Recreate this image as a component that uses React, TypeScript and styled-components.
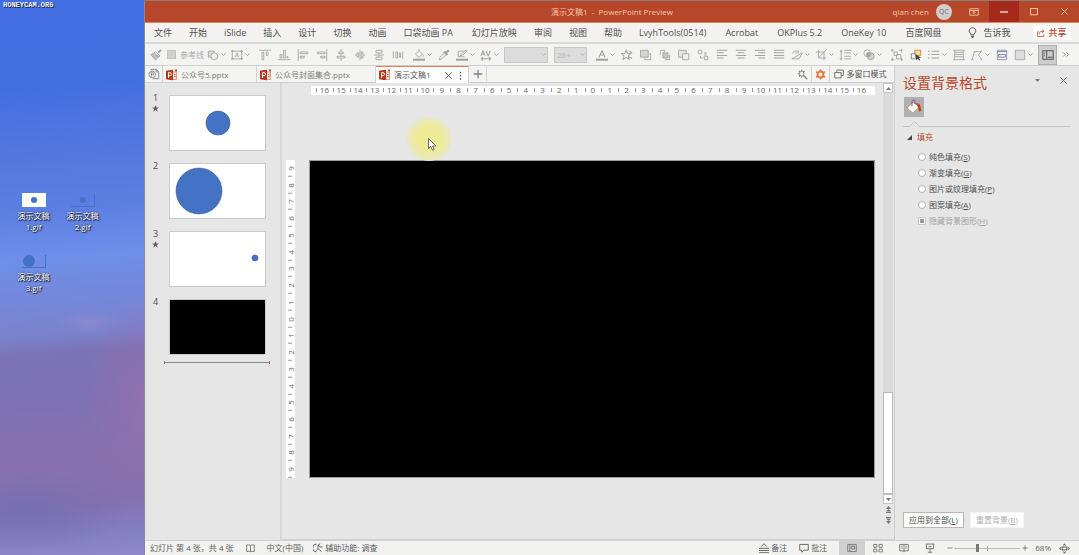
import React from "react";
import styled, { createGlobalStyle, css } from "styled-components";

const Global = createGlobalStyle`
  * { box-sizing: border-box; }
  html, body { margin: 0; padding: 0; }
  body, button, input, select {
    font-family: "Open Sans", "Noto Sans CJK SC", sans-serif;
    font-size: 8px;
    line-height: 12px;
    color: #4a4a4a;
  }
  button { background: none; border: 0; padding: 0; margin: 0; display: flex; align-items: center; justify-content: center; white-space: nowrap; }
  input { margin: 0; }
  svg { display: block; flex: none; }
`;

const Page = styled.div`
  display: flex;
  height: 100vh;
  overflow: hidden;
`;

/* ---------- desktop ---------- */

const Desktop = styled.aside`
  width: 144px;
  flex: none;
  padding: 0 0 0 3px;
  background:
    radial-gradient(ellipse 34px 12px at 62% 58%, rgba(150, 140, 204, 0.6), transparent),
    radial-gradient(ellipse 100px 40px at 20% 92%, rgba(114, 110, 176, 0.8), transparent),
    radial-gradient(ellipse 60px 100px at 100% 72%, rgba(146, 112, 176, 0.9), transparent),
    linear-gradient(176deg, #416ee2 0%, #446fe0 16%, #5077df 26%, #5c7fe2 38%, #6e8fe8 46%, #7488dc 53%, #7a82cc 60%, #7b74b6 63%, #7e72b4 72%, #8871b0 82%, #8471b0 90%, #8580c2 96%, #9088c8 100%);
`;

const Watermark = styled.div`
  font: bold 7px/11px "Liberation Mono", monospace;
  color: #f2f2f2;
  text-shadow: 1px 1px 0 #223;
`;

const Shortcuts = styled.div`
  display: grid;
  grid-template-columns: repeat(2, 49px);
  grid-auto-rows: 61px;
  padding: 182px 0 0 6px;
`;

const Shortcut = styled.a`
  display: flex;
  flex-direction: column;
  align-items: center;
  gap: 2px;
  width: 49px;
  text-align: center;
  text-decoration: none;
  color: #fff;
  line-height: 11px;
  text-shadow: 1px 1px 1px #111, 0 0 2px #222;
`;

/* ---------- window ---------- */

const Window = styled.main`
  flex: 1;
  min-width: 0;
  display: flex;
  flex-direction: column;
  border-left: 1px solid #8a8a8a;
  border-top: 1px solid #8a8078;
  background: #e6e6e6;
`;

const TitleBar = styled.header`
  display: grid;
  grid-template-columns: 1fr auto 1fr;
  align-items: center;
  height: 22px;
  flex: none;
  background: #b7472a;
  border-bottom: 1px solid #d98a5c;
  color: #f8c4a4;
`;

const TitleText = styled.h1`
  grid-column: 2;
  margin: 0;
  font-size: 8px;
  font-weight: 400;
  white-space: pre;
`;

const TitleRight = styled.div`
  display: flex;
  align-items: center;
  justify-content: flex-end;
  height: 21px;
`;

const Avatar = styled.span`
  width: 16px;
  height: 16px;
  margin: 0 7px;
  border-radius: 50%;
  background: #d2cdca;
  color: #777;
  font-size: 7px;
  line-height: 16px;
  text-align: center;
`;

const WinButton = styled.button<{ $hot?: boolean }>`
  width: 30px;
  height: 21px;
  color: ${(p) => (p.$hot ? "#fff" : "#f4bd9c")};
  background: ${(p) => (p.$hot ? "#a52a1c" : "none")};
`;

const MenuBar = styled.nav`
  display: flex;
  align-items: center;
  gap: 17px;
  height: 21px;
  flex: none;
  padding: 0 8px 0 9px;
  background: #f3f2f1;
  border-bottom: 2px solid #dadada;
`;

const MenuItem = styled.button<{ $wide?: boolean }>`
  font-size: 9px;
  gap: 6px;
  margin-right: ${(p) => (p.$wide ? 2 : 0)}px;
  color: #505050;
`;

const TellMe = styled(MenuItem)`
  margin-left: 8px;
`;

const Share = styled.button`
  width: 38px;
  height: 14px;
  gap: 3px;
  margin-left: auto;
  background: #fff;
  color: #b7472a;
  font-size: 9px;
  font-weight: 500;
`;

const ToolBar = styled.div`
  display: flex;
  align-items: center;
  height: 22px;
  flex: none;
  padding: 0 8px 0 1px;
  color: #a2a2a2;
  background: #f3f3f2;
  border-bottom: 1px solid #cfcfcf;
`;

const ToolGroup = styled.div<{ $tight?: boolean }>`
  display: flex;
  align-items: center;
  flex: none;
  margin-right: ${(p) => (p.$tight ? 0 : 3)}px;
`;

const Tool = styled.button<{ $menu?: boolean; $on?: boolean }>`
  width: ${(p) => (p.$menu ? 24 : 19)}px;
  height: 20px;
  flex: none;
  justify-content: ${(p) => (p.$menu ? "flex-start" : "center")};
  padding-left: ${(p) => (p.$menu ? 3 : 0)}px;
  gap: 2px;
  color: ${(p) => (p.$on ? "#555" : "#a2a2a2")};
  ${(p) => p.$on && css`background: #cdcdcd; border: 1px solid #b0b0b0;`}
`;

const GuideToggle = styled.label`
  display: flex;
  align-items: center;
  gap: 4px;
  width: 39px;
  padding-left: 2px;
  color: #aaa;
  white-space: nowrap;
  input { appearance: none; width: 9px; height: 9px; background: #cfcfcf; border: 1px solid #c2c2c2; }
`;

const Combo = styled.div<{ $w: number }>`
  position: relative;
  width: ${(p) => p.$w}px;
  flex: none;
  margin-right: 6px;
  select {
    appearance: none;
    display: block;
    width: 100%;
    height: 16px;
    padding: 0 2px;
    border: 1px solid #c6c6c6;
    border-radius: 0;
    background: #dcdcdc;
    color: #b4b4b4;
    opacity: 1;
  }
  svg { position: absolute; right: 2px; top: 5px; color: #b0b0b0; }
`;

const Body = styled.div`
  display: flex;
  flex: 1;
  min-height: 0;
`;

const Main = styled.div`
  display: flex;
  flex-direction: column;
  flex: 1;
  min-width: 0;
`;

const TabStrip = styled.div`
  display: flex;
  height: 17px;
  flex: none;
  background: #f3f3f2;
  border-bottom: 1px solid #cfcfcf;
`;

const StripButton = styled.button`
  width: 18px;
  border-right: 1px solid #d4d4d4;
  color: #808080;
`;

const ModeButton = styled(StripButton)`
  width: 64px;
  gap: 3px;
  padding-right: 4px;
  border-right: 0;
  color: #555;
`;

const DocTab = styled.div<{ $w: number; $active?: boolean }>`
  display: flex;
  align-items: center;
  gap: 3px;
  width: ${(p) => p.$w}px;
  height: ${(p) => (p.$active ? 17 : 16)}px;
  padding: 0 3px;
  border-top: 1px solid ${(p) => (p.$active ? "#e8814f" : "transparent")};
  border-right: 1px solid #d4d4d4;
  background: ${(p) => (p.$active ? "#fff" : "none")};
  button { color: ${(p) => (p.$active ? "#555" : "#7c7c7c")}; }
`;

const Spacer = styled.div`
  flex: 1;
`;

const Work = styled.div`
  display: flex;
  flex: 1;
  min-height: 0;
`;

const Thumbs = styled.ol`
  width: 137px;
  flex: none;
  margin: 0;
  padding: 12px 10px 0 8px;
  list-style: none;
  border-right: 2px solid #d8d8d8;
`;

const Thumb = styled.li`
  display: flex;
  gap: 11px;
  margin-bottom: 12px;
`;

const ThumbLabel = styled.div`
  display: flex;
  flex-direction: column;
  width: 5px;
  font-size: 9px;
  line-height: 6px;
  gap: 4px;
  svg { margin-left: -1px; }
`;

const ThumbSlide = styled.button<{ $dark?: boolean }>`
  width: 97px;
  height: 56px;
  border: 1px solid #cacaca;
  background: ${(p) => (p.$dark ? "#000" : "#fff")};
`;

const InsertMark = styled.div`
  height: 3px;
  margin: -6px 0 0 11px;
  border: solid #b5654a;
  border-width: 0 1px;
  background: linear-gradient(#8a8a8a, #8a8a8a) center / 100% 1px no-repeat;
`;

const Canvas = styled.section`
  display: flex;
  flex-direction: column;
  flex: 1;
  min-width: 0;
  padding: 3px 8px 0 4px;
  border-bottom: 1px solid #cfcfcf;
  position: relative;
`;

const RulerH = styled.div`
  display: flex;
  flex: none;
  height: 9px;
  margin-left: 25px;
  padding: 0 5px;
  background: #fff;
`;

const RulerV = styled.div`
  display: flex;
  flex-direction: column;
  width: 9px;
  background: #fff;
`;

const Mark = styled.span<{ $v?: boolean }>`
  position: relative;
  flex: 1;
  min-width: 0;
  min-height: 0;
  display: flex;
  align-items: center;
  justify-content: center;
  height: ${(p) => (p.$v ? "auto" : "8px")};
  line-height: 8px;
  color: #666;
  ${(p) => p.$v && css`writing-mode: vertical-rl; transform: rotate(180deg);`}
  &::before {
    content: "";
    position: absolute;
    background: #999;
    ${(p) => (p.$v ? "width: 4px; height: 1px; top: 0; left: 3px;" : "width: 1px; height: 4px; left: 0; top: 2px;")}
  }
`;

const Stage = styled.div`
  display: flex;
  flex: 1;
  align-items: center;
  padding-top: 4px;
`;

const StageRow = styled.div`
  display: flex;
  flex: 1;
  gap: 14px;
`;

const Slide = styled.div`
  flex: 1;
  aspect-ratio: 566 / 318;
  background: #000;
  border: 1px solid #9a9a9a;
`;

const Pointer = styled.div`
  position: absolute;
  left: 125px;
  top: 34px;
  width: 44px;
  height: 44px;
  border-radius: 50%;
  background: radial-gradient(circle, #eeeb96 0 12px, #ebe9b0 17px, #e9e8be 22px);
  svg { position: absolute; left: 21px; top: 21px; }
`;

const ScrollColumn = styled.div`
  display: flex;
  flex-direction: column;
  width: 11px;
  flex: none;
  padding-bottom: 13px;
  border-bottom: 1px solid #cfcfcf;
  color: #666;
`;

const ScrollButton = styled.button<{ $flat?: boolean }>`
  width: 10px;
  height: ${(p) => (p.$flat ? 11 : 10)}px;
  flex: none;
  border: ${(p) => (p.$flat ? "0" : "1px solid #c4c4c4")};
  background: ${(p) => (p.$flat ? "none" : "#fff")};
  color: #777;
`;

const Track = styled.div`
  display: flex;
  flex-direction: column;
  justify-content: flex-end;
  flex: 1;
  width: 10px;
  background: #dadada;
  &::after {
    content: "";
    height: 25%;
    background: #fff;
    border: 1px solid #b8b8b8;
  }
`;

const Pane = styled.aside`
  display: flex;
  flex-direction: column;
  width: 185px;
  flex: none;
  padding: 7px 9px 12px 8px;
  border-left: 1px solid #cfcfcf;
  background: #e6e6e6;
`;

const PaneHead = styled.div`
  display: flex;
  align-items: flex-start;
  h2 { flex: 1; margin: 0; font-size: 14px; line-height: 20px; font-weight: 400; color: #b7472a; }
  button { width: 14px; height: 14px; color: #777; }
  button + button { margin-left: 12px; }
`;

const FillButton = styled.button`
  width: 20px;
  height: 20px;
  margin: 4px 0 0 1px;
  background: #b0b0b0;
`;

const Divider = styled.div`
  display: flex;
  height: 10px;
  padding-left: 6px;
  border-bottom: 1px solid #c6c6c6;
  align-items: flex-end;
  svg { margin-bottom: -1px; }
`;

const SectionHead = styled.button`
  align-self: flex-start;
  gap: 5px;
  margin: 4px 0 8px 4px;
  color: #b7472a;
`;

const Options = styled.fieldset`
  display: flex;
  flex-direction: column;
  gap: 4px;
  flex: 1;
  margin: 0;
  padding: 0 0 0 15px;
  border: 0;
`;

const Option = styled.label<{ $off?: boolean }>`
  display: flex;
  align-items: center;
  gap: 3px;
  height: 12px;
  color: ${(p) => (p.$off ? "#a4a4a4" : "#505050")};
  input { appearance: none; width: 8px; height: 8px; background: #fff; border: 1px solid #b4b4b4; }
  input[type="radio"] { border-radius: 50%; }
  input[type="checkbox"] { background: linear-gradient(#999, #999) center / 4px 4px no-repeat #fff; border-color: #c8c8c8; }
`;

const PaneFoot = styled.div`
  display: flex;
  gap: 6px;
`;

const PaneButton = styled.button<{ $off?: boolean }>`
  height: 16px;
  padding: 0 5px;
  border: 1px solid ${(p) => (p.$off ? "#f4f4f4" : "#b8b8b8")};
  background: #fff;
  color: ${(p) => (p.$off ? "#b0b0b0" : "#4a4a4a")};
`;

const StatusBar = styled.footer`
  display: flex;
  align-items: center;
  height: 15px;
  flex: none;
  padding: 0 7px 0 5px;
  background: #f2f2f0;
  border-top: 1px solid #cfcfcf;
  white-space: nowrap;
`;

const StatusItem = styled.button<{ $gap?: number }>`
  gap: 2px;
  margin-right: ${(p) => p.$gap ?? 12}px;
  color: #606060;
`;

const ViewButton = styled.button<{ $on?: boolean }>`
  width: 26px;
  height: 14px;
  color: #707070;
  background: ${(p) => (p.$on ? "#d0d0d0" : "none")};
`;

const Zoom = styled.div`
  display: flex;
  align-items: center;
  margin: 0 6px 0 2px;
  button { width: 9px; height: 12px; color: #777; }
  input {
    appearance: none;
    width: 66px;
    height: 12px;
    background:
      linear-gradient(#aaa, #aaa) center / 1px 5px no-repeat,
      linear-gradient(#bbb, #bbb) center / 100% 1px no-repeat;
  }
  input::-webkit-slider-thumb { appearance: none; width: 3px; height: 8px; background: #777; }
`;

/* ---------- drawings ---------- */

const Ico = ({ children, size = 14 }: { children: React.ReactNode; size?: number }) => (
  <svg width={size} height={size} viewBox="0 0 14 14" fill="none" stroke="currentColor" strokeWidth="1" aria-hidden="true">
    {children}
  </svg>
);

const Chevron = () => (
  <svg width="5" height="5" viewBox="0 0 5 5" fill="none" stroke="currentColor" aria-hidden="true">
    <path d="M.5 1.500l2 2 2-2" />
  </svg>
);

const Triangle = ({ up }: { up?: boolean }) => (
  <svg width="5" height="3" viewBox="0 0 5 3" fill="currentColor" aria-hidden="true">
    <path d={up ? "M0 3h5L2.500 0z" : "M0 0h5L2.500 3z"} />
  </svg>
);

const DoubleArrow = ({ down }: { down?: boolean }) => (
  <svg width="5" height="7" viewBox="0 0 5 7" fill="currentColor" aria-hidden="true">
    <path d={down ? "M0 0h5v1H0zM0 1.500h5L2.500 4zM0 4h5L2.500 7z" : "M0 3h5L2.500 0zM0 5.500h5L2.500 3zM0 6h5v1H0z"} />
  </svg>
);

const Cross = () => <Ico size={9}><path d="M2 2l10 10M12 2L2 12" strokeWidth="1.500" /></Ico>;

const PptIcon = () => (
  <svg width="12" height="12" viewBox="0 0 12 12" aria-hidden="true">
    <path d="M6.500 3h4v7.500h-4z" fill="#f1e2dc" stroke="#d08a74" strokeWidth=".8" />
    <path d="M0 2.500Q0 1.500 1 1.500L7 .8v10.400L1 10.500Q0 10.500 0 9.500z" fill="#b7381c" />
    <path d="M2.500 9V3.700h1.500a1.500 1.500 0 010 3H2.500" fill="none" stroke="#fff" />
    <path d="M9 .5h2v2H9z" fill="#d0492b" />
    <path d="M8 5.500h1.500M8 7.500h1.500" stroke="#c8674c" />
  </svg>
);

const StarMark = () => (
  <svg width="7" height="7" viewBox="0 0 7 7" fill="#606060" aria-hidden="true">
    <path d="M3.500 0l.9 2.400H7L4.900 4l.8 2.700-2.200-1.600-2.200 1.600L2.100 4 0 2.400h2.600z" />
  </svg>
);

const G: Record<string, React.ReactNode> = {
  brush: <><path d="M13 1L9.500 4.500" strokeWidth="2" /><path d="M6.500 3l5 5-1 1.500-5.500-5z" fill="#f3f3f2" /><path d="M4.500 5L1 6.500 6.500 13l3-3.500z" fill="currentColor" fillOpacity=".6" /></>,
  shapes: <><path d="M1.500 2.500h7v7h-7z" fill="#dedede" /><circle cx="8.500" cy="8.500" r="4" fill="#f3f3f2" /></>,
  text: <><path d="M1.500 2.500h11v9h-11z" /><path d="M5 9.500L7 4.500l2 5M6 8h2" /><path d="M0 2.500h3M11 2.500h3M0 11.500h3M11 11.500h3M1.500 1v3M12.500 1v3M1.500 10v3M12.500 10v3" /></>,
  top: <><path d="M0 1.500h14" /><path d="M3.500 3.500h2v9h-2zM8.500 3.500h2v4h-2z" /></>,
  bottom: <><path d="M0 12.500h14" /><path d="M2.500 6.500h2v4h-2zM6.500 1.500h2v9h-2zM10.500 8.500h1v2h-1z" /></>,
  left: <><path d="M1.500 0v14" /><path d="M3.500 3.500h9v2h-9zM3.500 8.500h5v2h-5z" /></>,
  right: <><path d="M12.500 0v14" /><path d="M1.500 3.500h9v2h-9zM5.500 8.500h5v2h-5z" /></>,
  middle: <><path d="M7 0v3M7 6v2M7 11v3" /><path d="M4.500 3.500h5v2h-5zM2.500 8.500h9v2h-9z" /></>,
  distH: <><path d="M3.500 4.500h2v5h-2zM8.500 3.500h2v7h-2zM7 1v12M1 7h2M11 7h2" /></>,
  distV: <><path d="M3.500 1.500h7v3h-7zM3.500 9.500h7v3h-7zM7 5v4M1 7h12" /></>,
  spread: <><path d="M1.500 3v8M12.500 3v8M4.500 3.500h2v7h-2zM8.500 4.500h1.500v5H8.500z" /></>,
  bucket: <><path d="M3 6l4-4 4 4-4 4zM7 2V0M11.500 6.500c1 1.500 1 2-.2 2.500" /><path d="M0 12.500h14" strokeWidth="2.400" /></>,
  dropper: <><path d="M1.500 12.500l1-3 5-5 2 2-5 5z" /><path d="M7 3l4 4M8.500 5.500L12.500 1.500" strokeWidth="2.600" /></>,
  pen: <><path d="M9 2.500H2.500v6.500H10M5 8l1-2 6-5 1 1.500L7.500 7.500z" /><path d="M0 12.500h14" strokeWidth="2.400" /></>,
  spacing: <><path d="M1 8l2.500-6L6 8M2 6h3M7 2l2.500 6L12 2M1.500 11.500h11M3.500 9.500l-2 2 2 2M10.500 9.500l2 2-2 2" strokeWidth="1.200" /></>,
  fontColor: <><path d="M3.500 9.500L7 2l3.500 7.500M4.500 7h5" strokeWidth="1.300" /><path d="M0 12.500h14" strokeWidth="2.400" /></>,
  star: <><path d="M6 1.500L7.500 5l4 .3-3 2.700 1 4-3.500-2-3.500 2 1-4-3-2.700L4.500 5zM10 2l3 3M9 9l4 2" strokeWidth="1.200" /></>,
  front: <><path d="M5.500 10.500v2h7v-7h-2" /><path d="M.5 1.500h9v8h-9z" fill="#d6d6d6" /></>,
  forward: <><path d="M1.500 6.500v-5h5v2M12.500 7v5.500H7" /><path d="M4.500 4.500h6v6h-6z" fill="#c6c6c6" /></>,
  back: <><path d="M.5 1.500h9v8h-9z" fill="#e2e2e2" /><path d="M5.500 5.500h7v7h-7z" fill="#f3f3f2" /></>,
  backward: <><path d="M1.500 1.500h4v4h-4zM8.500 8.500h4v4h-4z" /><path d="M8 4.500h2.500V7H8M4 8v2.500h3" /></>,
  linesL: <path d="M1 1.500h12M1 4.500h8M1 7.500h12M1 10.500h8" strokeWidth="1.200" />,
  linesC: <path d="M1 1.500h12M3 4.500h8M1 7.500h12M3 10.500h8" strokeWidth="1.200" />,
  linesR: <path d="M1 1.500h12M5 4.500h8M1 7.500h12M5 10.500h8" strokeWidth="1.200" />,
  linesJ: <path d="M1 1.500h12M1 4.500h12M1 7.500h12M1 10.500h12" strokeWidth="1.200" />,
  rotate: <path d="M1 11.500h8.500l3.500-7L1 11.500M1.500 5.500c1-3.500 5-4 6.500-1.500M8.500 1.500V4.500H5.500" />,
  crop: <path d="M4 1v9.500H13M1 3.500h9.500V13M13.500.5l-9 9.500" />,
  lineGap: <path d="M6 1.500h8M6 4.500h8M6 8.500h8M6 11.500h8M2.500 1v12M1 3.500l1.500-2L4 3.500M1 10.500l1.500 2 1.500-2" />,
  merge: <><circle cx="5" cy="5" r="4" /><circle cx="9" cy="8.500" r="4" fill="#d0d0d0" /><circle cx="6.500" cy="6.500" r="2.400" fill="#a2a2a2" /></>,
  group: <><path d="M3.500 3.500h4v4h-4zM6.500 6.500h5v5h-5z" /><path d="M0 1.500h3M1.500 0v3M9 1.500h4M12.500 0v4M0 12.500h4M1.500 10v4M11 12.500h3M12.500 10v4" /></>,
  list: <path d="M0 2.500h2M4 2.500h9M0 6.500h2M4 6.500h9M0 10.500h2M4 10.500h9" strokeWidth="1.200" />,
  table: <path d="M0 1.500h14M2.500 4h9M2.500 6.500h9M2.500 9h9M0 12.500h14M2 2v10M12 2v10" />,
  curve: <path d="M1.500 12L4 3h8L8.500 7l4 5M0 12.500h3M11 2.500h2M3 3.500h2M11 12.500h2" />,
  square: <path d="M1.500 1.500h11v11h-11z" fill="#dedede" />,
};

const Glyph = ({ name }: { name: string }) => <Ico size={12}>{G[name]}</Ico>;

const tool = (name: string, menu = false) => (
  <Tool key={name} $menu={menu} aria-label={name}>
    <Glyph name={name} />
    {menu && <Chevron />}
  </Tool>
);

const menus = ["文件", "开始", "iSlide", "插入", "设计", "切换", "动画", "口袋动画 PA", "幻灯片放映", "审阅", "视图", "帮助", "LvyhTools(0514)", "Acrobat", "OKPlus 5.2", "OneKey 10", "百度网盘"];
const hMarks = Array.from({ length: 33 }, (_, i) => Math.abs(i - 16));
const vMarks = Array.from({ length: 19 }, (_, i) => Math.abs(i - 9));

const thumbs = [
  { star: true, cx: 48, cy: 27, r: 12 },
  { star: false, cx: 29, cy: 27, r: 23 },
  { star: true, cx: 85, cy: 26, r: 3 },
  { star: false, dark: true, cx: 0, cy: 0, r: 0 },
];

const options = [["纯色填充", "S"], ["渐变填充", "G"], ["图片或纹理填充", "P"], ["图案填充", "A"]];

const shortcuts = [
  { name: "演示文稿", file: "1.gif", paper: true, cx: 12, cy: 7, r: 3 },
  { name: "演示文稿", file: "2.gif", paper: false, cx: 12, cy: 7, r: 3 },
  { name: "演示文稿", file: "3.gif", paper: false, cx: 7, cy: 7, r: 6 },
];

export default function App() {
  return (
    <Page>
      <Global />
      <Desktop>
        <Watermark>HONEYCAM.ORG</Watermark>
        <Shortcuts>
          {shortcuts.map((s) => (
            <Shortcut href="#" key={s.file}>
              <svg width="24" height="15" viewBox="0 0 24 15" aria-hidden="true">
                {s.paper ? <path d="M0 0h24v14H0z" fill="#fff" /> : <path d="M0 13.500h23.500V1" fill="none" stroke="#4672c4" />}
                <circle cx={s.cx} cy={s.cy} r={s.r} fill="#4472c4" />
              </svg>
              <span>{s.name}<br />{s.file}</span>
            </Shortcut>
          ))}
        </Shortcuts>
      </Desktop>

      <Window>
        <TitleBar>
          <TitleText>演示文稿1  -  PowerPoint Preview</TitleText>
          <TitleRight>
            <span>qian chen</span>
            <Avatar>QC</Avatar>
            <WinButton aria-label="功能区显示选项"><Ico size={10}><path d="M1 2.500h12v9H1zM1 5h12M7 10V6M5 8l2-2 2 2" strokeWidth="1.300" /></Ico></WinButton>
            <WinButton $hot aria-label="最小化"><Ico size={8}><path d="M0 7h14" strokeWidth="2" /></Ico></WinButton>
            <WinButton aria-label="最大化"><Ico size={8}><path d="M1 1h12v11H1z" strokeWidth="1.800" /></Ico></WinButton>
            <WinButton aria-label="关闭"><Cross /></WinButton>
          </TitleRight>
        </TitleBar>

        <MenuBar>
          {menus.map((m, i) => <MenuItem key={m} $wide={i === 7 || (i > 11 && i < 16)}>{m}</MenuItem>)}
          <TellMe>
            <Ico size={11}><path d="M5 10V8.500C1 6 3 1 7 1s6 5 2 7.500V10zM5 12h4M6 13.500h2" strokeWidth="1.200" /></Ico>
            告诉我
          </TellMe>
          <Share>
            <Ico size={8}><path d="M4 5H1v8h11V9M4 9c0-4 3-5 8-5M9 1l3.500 3L9 7" strokeWidth="1.400" /></Ico>
            共享
          </Share>
        </MenuBar>

        <ToolBar>
          <ToolGroup>
            {tool("brush")}
            <GuideToggle><input type="checkbox" disabled />参考线</GuideToggle>
            {tool("shapes", true)}
            {tool("text", true)}
          </ToolGroup>
          <ToolGroup>
            {["top", "bottom", "left", "right", "middle", "distH", "distV", "spread"].map((n) => tool(n))}
          </ToolGroup>
          <ToolGroup>
            {tool("bucket", true)}
            {tool("dropper")}
            {tool("pen", true)}
            {tool("spacing", true)}
          </ToolGroup>
          <Combo $w={44}><select aria-label="字体" disabled><option> </option></select><Chevron /></Combo>
          <Combo $w={33}><select aria-label="字号" disabled><option>28+</option></select><Chevron /></Combo>
          <ToolGroup>
            {tool("fontColor", true)}
            {["star", "front", "forward", "back", "backward", "linesL", "linesC", "linesR", "linesJ"].map((n) => tool(n))}
            {tool("rotate", true)}
            {tool("crop", true)}
            {tool("lineGap", true)}
            {tool("merge", true)}
          </ToolGroup>
          <ToolGroup $tight>
            {tool("group")}
            <Tool aria-label="选择窗格">
              <Ico size={12}><path d="M5.500 1.500h7v6h-7z" fill="#f9df8c" stroke="#c97a4a" /><path d="M1.500 5.500h5v6h-5z" fill="#f3f3f2" stroke="#777" /><path d="M7 6v7l2-2 1.500 2.500L12 13l-1.500-2.500H13z" fill="#444" stroke="none" /></Ico>
            </Tool>
            {tool("list", true)}
          </ToolGroup>
          <ToolGroup $tight>
            {tool("table")}
            {tool("curve", true)}
          </ToolGroup>
          <ToolGroup>
            <Tool aria-label="幻灯片大小">
              <Ico size={12}><path d="M1.500 1.500h11v11h-11z" stroke="#8c8cb0" /><path d="M1.500 3h11M3 6.500h8v3H3z" stroke="#7474a8" /></Ico>
            </Tool>
            {tool("square", true)}
          </ToolGroup>
          <Tool $on aria-label="窗格">
            <Ico size={12}><path d="M1 2h12v10H1zM5.500 2V12M2.500 5h1M2.500 8h1M7 9.500h5" strokeWidth="1.200" /></Ico>
          </Tool>
          <Tool aria-label="更多"><Ico size={9}><path d="M2 4l3 3-3 3M7 4l3 3-3 3" stroke="#777" strokeWidth="1.400" /></Ico></Tool>
        </ToolBar>

        <Body>
          <Main>
            <TabStrip>
              <StripButton aria-label="文档列表"><Ico size={12}><path d="M3.500 3V1.500h6l3 3v8h-7M9.500 1.500v3h3" /><circle cx="5" cy="7.500" r="3.800" /><path d="M4 10V5.500h1.500a1 1 0 010 2.500H4" /></Ico></StripButton>
              <DocTab $w={94}><PptIcon /><button>公众号5.pptx</button></DocTab>
              <DocTab $w={119}><PptIcon /><button>公众号封面集合.pptx</button></DocTab>
              <DocTab $w={93} $active>
                <PptIcon /><button>演示文稿1</button><Spacer />
                <button aria-label="关闭标签"><Cross /></button>
                <button aria-label="标签菜单"><Ico size={9}><path d="M7 1v2.500M7 6v2.500M7 11v2.500" strokeWidth="2" /></Ico></button>
              </DocTab>
              <StripButton aria-label="新建标签"><Ico size={10}><path d="M7 1v12M1 7h12" strokeWidth="1.800" /></Ico></StripButton>
              <Spacer />
              <StripButton aria-label="搜索标签"><Ico size={11}><circle cx="6" cy="6" r="3" /><path d="M8 8l5 5M6 1v2M6 9v2M1 6h2M2.500 2.500L4 4M9.500 2.500L8 4M2.500 9.500L4 8" strokeWidth="1.500" /></Ico></StripButton>
              <StripButton aria-label="设置"><Ico size={11}><circle cx="7" cy="7" r="3.800" stroke="#e2743c" strokeWidth="2.400" /><path d="M7 .5v2M7 11.500v2M1.500 3.500l1.500 1M11 9.500l1.500 1M1.500 10.500l1.500-1M11 4.500l1.500-1" stroke="#e2743c" strokeWidth="2" /></Ico></StripButton>
              <ModeButton><Ico size={10}><path d="M4 4V1.500h9V9h-2.500M1 5h9v7.500H1z" strokeWidth="1.100" /></Ico>多窗口模式</ModeButton>
            </TabStrip>

            <Work>
              <Thumbs>
                {thumbs.map((t, i) => (
                  <Thumb key={i}>
                    <ThumbLabel>{i + 1}{t.star && <StarMark />}</ThumbLabel>
                    <ThumbSlide $dark={t.dark} aria-label={`幻灯片 ${i + 1}`}>
                      <svg width="95" height="54" viewBox="0 0 95 54" aria-hidden="true">
                        <circle cx={t.cx} cy={t.cy} r={t.r} fill="#4472c4" stroke={t.r ? "#3d568f" : "none"} strokeWidth=".6" />
                      </svg>
                    </ThumbSlide>
                  </Thumb>
                ))}
                <InsertMark />
              </Thumbs>

              <Canvas>
                <RulerH>{hMarks.map((n, i) => <Mark key={i}>{n}</Mark>)}</RulerH>
                <Stage>
                  <StageRow>
                    <RulerV>{vMarks.map((n, i) => <Mark $v key={i}>{n}</Mark>)}</RulerV>
                    <Slide />
                  </StageRow>
                </Stage>
                <Pointer>
                  <svg width="9" height="13" viewBox="0 0 9 13" aria-hidden="true">
                    <path d="M.5.5v10l2.300-2 1.700 3.800 1.700-.8-1.700-3.500h3.300z" fill="#fff" stroke="#444" strokeWidth=".8" />
                  </svg>
                </Pointer>
              </Canvas>

              <ScrollColumn>
                <ScrollButton aria-label="向上滚动"><Triangle up /></ScrollButton>
                <Track />
                <ScrollButton aria-label="向下滚动"><Triangle /></ScrollButton>
                <ScrollButton $flat aria-label="上一张幻灯片"><DoubleArrow /></ScrollButton>
                <ScrollButton $flat aria-label="下一张幻灯片"><DoubleArrow down /></ScrollButton>
              </ScrollColumn>
            </Work>
          </Main>

          <Pane>
            <PaneHead>
              <h2>设置背景格式</h2>
              <button aria-label="窗格选项"><Triangle /></button>
              <button aria-label="关闭窗格"><Cross /></button>
            </PaneHead>
            <FillButton aria-label="填充">
              <svg width="16" height="16" viewBox="0 0 16 16" aria-hidden="true">
                <path d="M1 9l6-6 6 5-6 6z" fill="#fff" stroke="#e0906c" strokeWidth=".8" />
                <path d="M6 7V2.500c0-2 3-2 3 0V5" fill="none" stroke="#8a4a78" />
                <path d="M10 4.500c4-1 5 3 5 7.500-1.500 1-2.500 0-2.500-1.500 0-2-1-3.500-2.500-6z" fill="#c43e1c" />
              </svg>
            </FillButton>
            <Divider>
              <svg width="11" height="6" viewBox="0 0 11 6" aria-hidden="true"><path d="M.5 5.500l5-5 5 5" fill="#e6e6e6" stroke="#c6c6c6" /><path d="M1.500 5.500h8" stroke="#e6e6e6" /></svg>
            </Divider>
            <SectionHead>
              <svg width="5" height="5" viewBox="0 0 5 5" aria-hidden="true"><path d="M5 0v5H0z" fill="#444" /></svg>
              填充
            </SectionHead>
            <Options>
              {options.map(([name, key]) => (
                <Option key={key}><input type="radio" name="fill" /><span>{name}(<u>{key}</u>)</span></Option>
              ))}
              <Option $off><input type="checkbox" disabled /><span>隐藏背景图形(<u>H</u>)</span></Option>
            </Options>
            <PaneFoot>
              <PaneButton>应用到全部(<u>L</u>)</PaneButton>
              <PaneButton $off disabled>重置背景(<u>B</u>)</PaneButton>
            </PaneFoot>
          </Pane>
        </Body>

        <StatusBar>
          <StatusItem>幻灯片 第 4 张，共 4 张</StatusItem>
          <StatusItem aria-label="拼写检查"><Ico size={9}><path d="M7 3L5.500 1.500H1v10h5l1 1 1-1h5v-10H8.500zM7 3v9" strokeWidth="1.200" /></Ico></StatusItem>
          <StatusItem $gap={10}>中文(中国)</StatusItem>
          <StatusItem><Ico size={10}><path d="M5 1.500a5.500 5.500 0 000 11M7 3v5l5 4M7 8l-3 3M9.500 5.500h4M10 1l-3 2 3 2" strokeWidth="1.300" /></Ico>辅助功能: 调查</StatusItem>
          <Spacer />
          <StatusItem><Ico size={10}><path d="M0 7.500h14M0 10.500h14M0 13.500h14M3 5l4-4 4 4" strokeWidth="1.300" /></Ico>备注</StatusItem>
          <StatusItem><Ico size={10}><path d="M1 2h12v8H7l-3 3v-3H1z" strokeWidth="1.300" /></Ico>批注</StatusItem>
          <ViewButton $on aria-label="普通视图"><Ico size={10}><path d="M1 2h12v10H1zM4 2v10M6.500 4.500h4v4h-4z" strokeWidth="1.200" /></Ico></ViewButton>
          <ViewButton aria-label="幻灯片浏览"><Ico size={10}><path d="M1 2h4.500v4H1zM8.500 2H13v4H8.500zM1 8.500h4.500v4H1zM8.500 8.500H13v4H8.500z" strokeWidth="1.200" /></Ico></ViewButton>
          <ViewButton aria-label="阅读视图"><Ico size={10}><path d="M1 2h12v9H1zM7 2v11M3 4.500h2M3 7h2M9 4.500h2M9 7h2" strokeWidth="1.200" /></Ico></ViewButton>
          <ViewButton aria-label="幻灯片放映"><Ico size={10}><path d="M1 1.500h12M2 1.500V8h10V1.500M7 8v5M4 13h6M5 5h4" strokeWidth="1.300" /></Ico></ViewButton>
          <Zoom>
            <button aria-label="缩小"><Ico size={6}><path d="M1 7h12" strokeWidth="2" /></Ico></button>
            <input type="range" aria-label="缩放" min={0} max={100} defaultValue={34} />
            <button aria-label="放大"><Ico size={6}><path d="M1 7h12M7 1v12" strokeWidth="2" /></Ico></button>
          </Zoom>
          <StatusItem $gap={8}>68%</StatusItem>
          <StatusItem $gap={2} aria-label="适应窗口"><Ico size={11}><path d="M4 5h6v4H4zM5.500 3L7 1.500 8.500 3M5.500 11L7 12.500 8.500 11M2.500 5.500L1 7l1.500 1.500M11.500 5.500L13 7l-1.500 1.500" strokeWidth="1.300" /></Ico></StatusItem>
        </StatusBar>
      </Window>
    </Page>
  );
}
